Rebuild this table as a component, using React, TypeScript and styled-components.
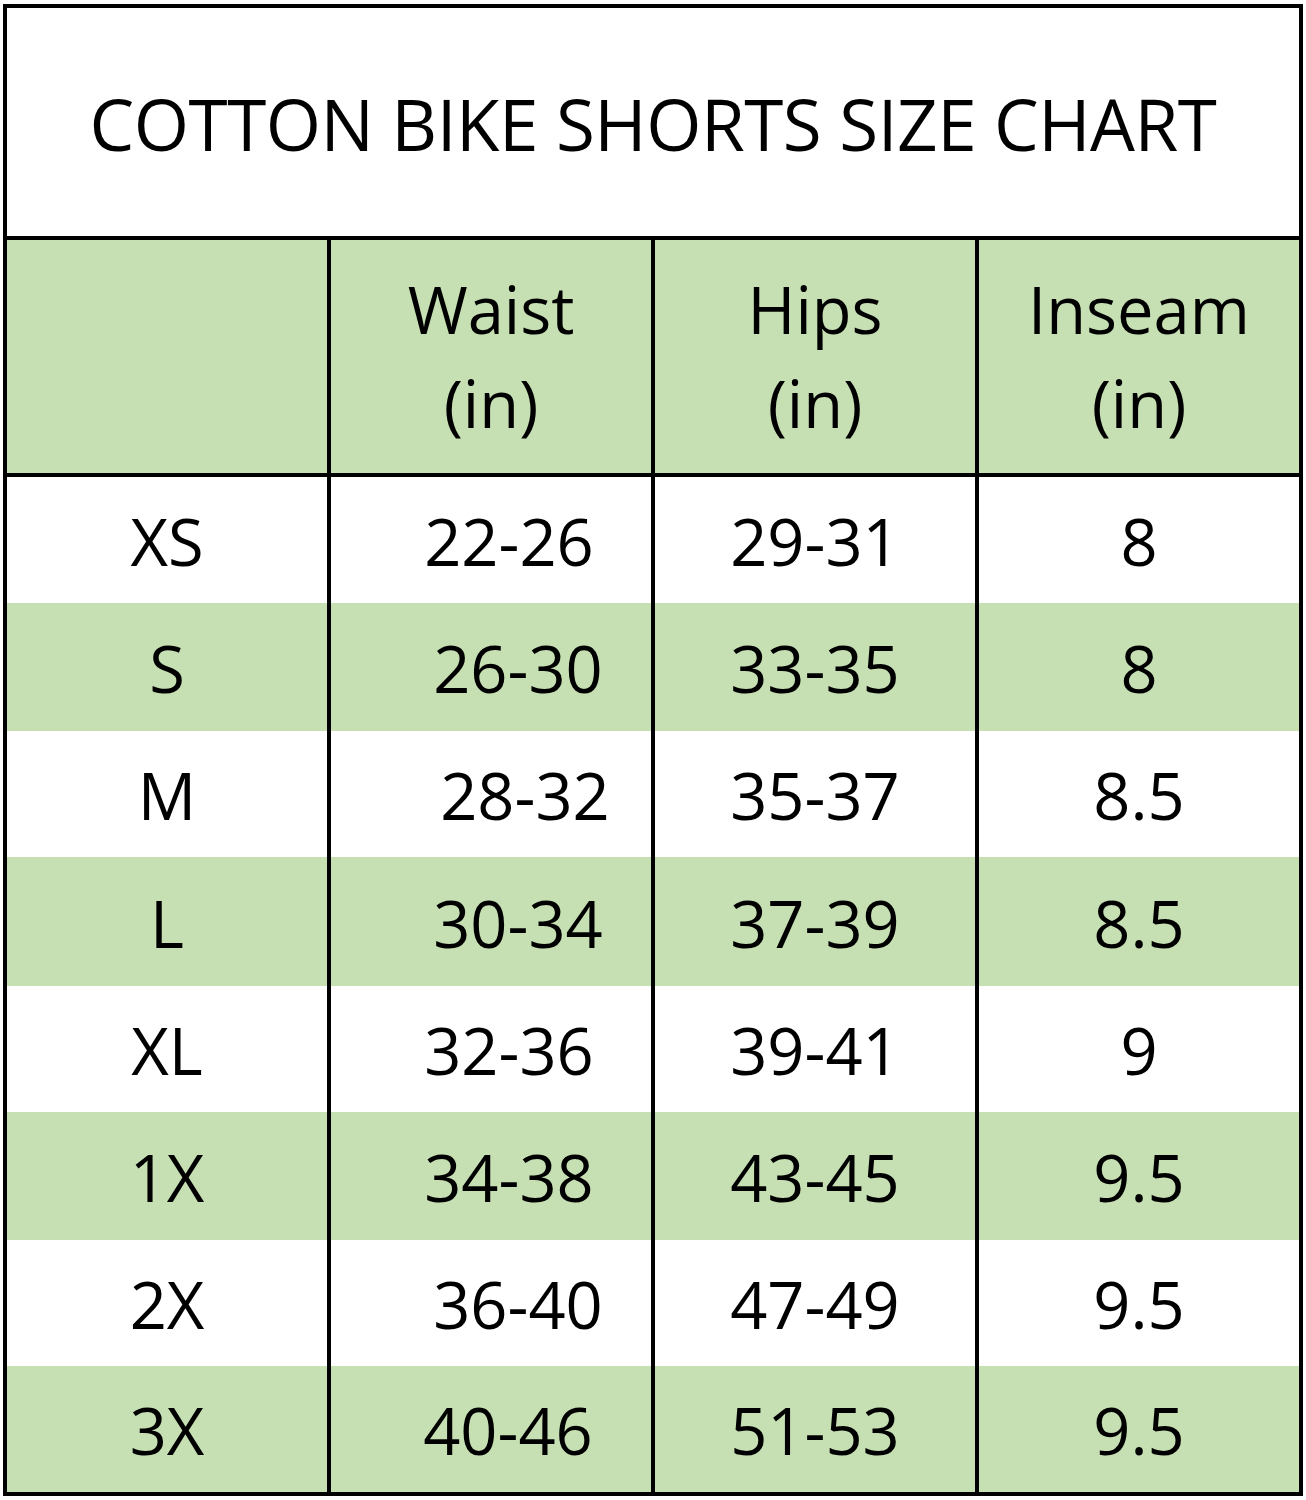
import React from "react";
import styled, { createGlobalStyle } from "styled-components";

const Global = createGlobalStyle`
  html, body { margin: 0; padding: 0; background: #ffffff; }
  body { font-family: "Open Sans", "Liberation Sans", sans-serif; color: #000; }
`;

const GREEN = "#c6e0b4";
const LINE = "#000000";

const Page = styled.div`
  width: 1306px;
  height: 1500px;
  padding: 4px 0 0 3px;
  box-sizing: border-box;
  background: #fff;
`;

const Chart = styled.div`
  width: 1300px;
  box-sizing: border-box;
  border: 4px solid ${LINE};
  display: flex;
  flex-direction: column;
  background: ${LINE};
  gap: 4px;
`;

const Title = styled.div`
  height: 228px;
  background: #fff;
  display: flex;
  align-items: center;
  justify-content: center;
  font-size: 71px;
  letter-spacing: -0.5px;
  padding-top: 2px;
  box-sizing: border-box;
`;

const Body = styled.div`
  display: flex;
  flex-direction: column;
`;

const Row = styled.div<{ $h: number }>`
  display: grid;
  grid-template-columns: repeat(4, 320px);
  column-gap: 4px;
  height: ${(p) => p.$h}px;
`;

const HeaderRow = styled(Row)`
  margin-bottom: 4px;
`;

const Cell = styled.div<{ $green?: boolean; $shift?: number }>`
  background: ${(p) => (p.$green ? GREEN : "#fff")};
  display: flex;
  align-items: center;
  justify-content: center;
  font-size: 65px;
  padding-left: ${(p) => (p.$shift ? p.$shift * 2 : 0)}px;
  padding-top: 2px;
  box-sizing: border-box;
`;

const HeadCell = styled(Cell)`
  flex-direction: column;
  line-height: 94px;
  padding-bottom: 4px;
`;

const rows = [
  ["XS", "22-26", 18, "29-31", "8"],
  ["S", "26-30", 27, "33-35", "8"],
  ["M", "28-32", 34, "35-37", "8.5"],
  ["L", "30-34", 27, "37-39", "8.5"],
  ["XL", "32-36", 18, "39-41", "9"],
  ["1X", "34-38", 18, "43-45", "9.5"],
  ["2X", "36-40", 27, "47-49", "9.5"],
  ["3X", "40-46", 17, "51-53", "9.5"],
] as const;

const heights = [126, 128, 126, 129, 126, 128, 126, 126];

export default function App() {
  return (
    <>
      <Global />
      <Page>
        <Chart>
          <Title>COTTON BIKE SHORTS SIZE CHART</Title>
          <Body>
            <HeaderRow $h={233}>
              <HeadCell $green />
              <HeadCell $green>
                <span>Waist</span>
                <span>(in)</span>
              </HeadCell>
              <HeadCell $green>
                <span>Hips</span>
                <span>(in)</span>
              </HeadCell>
              <HeadCell $green>
                <span>Inseam</span>
                <span>(in)</span>
              </HeadCell>
            </HeaderRow>
            {rows.map((r, i) => {
              const g = i % 2 === 1;
              return (
                <Row key={r[0]} $h={heights[i]}>
                  <Cell $green={g}>{r[0]}</Cell>
                  <Cell $green={g} $shift={r[2]}>
                    {r[1]}
                  </Cell>
                  <Cell $green={g}>{r[3]}</Cell>
                  <Cell $green={g}>{r[4]}</Cell>
                </Row>
              );
            })}
          </Body>
        </Chart>
      </Page>
    </>
  );
}
